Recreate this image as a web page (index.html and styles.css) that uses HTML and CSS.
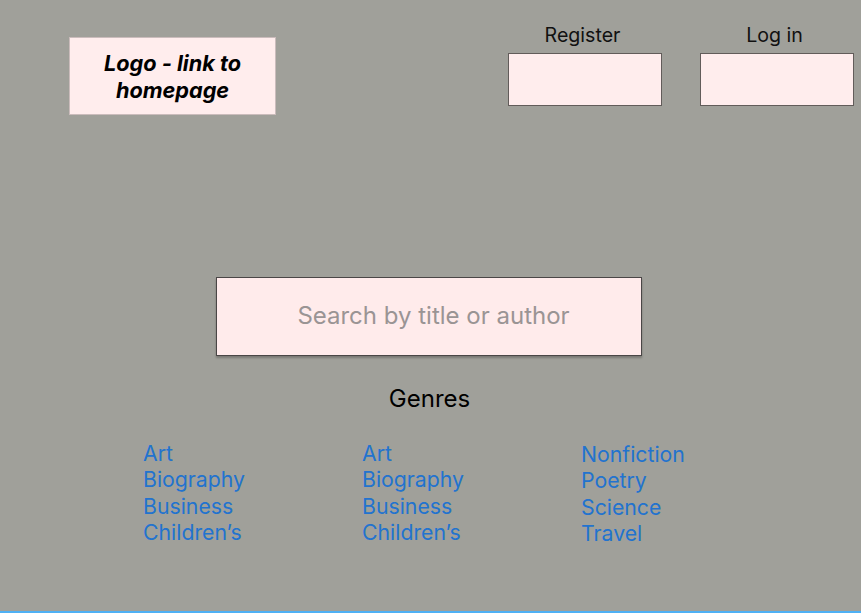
FILE: index.html
```html
<!DOCTYPE html>
<html lang="en">
<head>
<meta charset="utf-8">
<title>Books</title>
<link rel="stylesheet" href="styles.css">
</head>
<body>
<div class="page">
  <header class="header">
    <a class="logo" href="#">Logo - link to<br>homepage</a>
    <div class="auth">
      <div class="auth-item">
        <span class="auth-label">Register</span>
        <div class="auth-box"></div>
      </div>
      <div class="auth-item">
        <span class="auth-label">Log in</span>
        <div class="auth-box"></div>
      </div>
    </div>
  </header>
  <div class="search">Search by title or author</div>
  <h2 class="genres-title">Genres</h2>
  <div class="genres">
    <ul class="genre-col">
      <li><a href="#">Art</a></li>
      <li><a href="#">Biography</a></li>
      <li><a href="#">Business</a></li>
      <li><a href="#">Children’s</a></li>
    </ul>
    <ul class="genre-col">
      <li><a href="#">Art</a></li>
      <li><a href="#">Biography</a></li>
      <li><a href="#">Business</a></li>
      <li><a href="#">Children’s</a></li>
    </ul>
    <ul class="genre-col genre-col-last">
      <li><a href="#">Nonfiction</a></li>
      <li><a href="#">Poetry</a></li>
      <li><a href="#">Science</a></li>
      <li><a href="#">Travel</a></li>
    </ul>
  </div>
</div>
</body>
</html>
```

FILE: styles.css
```css
* { box-sizing: border-box; }
html, body { margin: 0; padding: 0; }
body {
  font-family: Inter, "Noto Sans", sans-serif;
  background: #a0a09a;
}
.page {
  width: 861px;
  height: 613px;
  background: #a0a09a;
  border-bottom: 2px solid #4eb0f4;
  overflow: hidden;
}
.header {
  display: flex;
  align-items: flex-start;
}
.logo {
  margin-left: 69px;
  margin-top: 37px;
  width: 207px;
  height: 78px;
  background: #ffeded;
  border: 1px solid #cbbcbc;
  display: flex;
  align-items: center;
  justify-content: center;
  text-align: center;
  font-size: 21.7px;
  font-weight: 700;
  font-style: italic;
  line-height: 27px;
  color: #000;
  text-decoration: none;
  padding-top: 2px;
}
.auth {
  margin-left: auto;
  margin-right: 7px;
  padding-top: 24px;
  display: flex;
  gap: 38px;
}
.auth-item {
  display: flex;
  flex-direction: column;
  align-items: center;
  gap: 7px;
}
.auth-label {
  font-size: 19.6px;
  line-height: 22px;
  color: #111;
  padding-right: 5px;
}
.auth-box {
  width: 154px;
  height: 53px;
  background: #ffeded;
  border: 1px solid #625c5a;
}
.search {
  margin-top: 162px;
  margin-left: 216px;
  width: 426px;
  height: 79px;
  background: #ffebeb;
  border: 1px solid #4a4646;
  box-shadow: 0 2px 2px rgba(0, 0, 0, 0.25);
  display: flex;
  align-items: center;
  justify-content: center;
  font-size: 24px;
  color: #9a9494;
  padding-left: 9px;
  padding-bottom: 2px;
}
.genres-title {
  margin: 30px 0 0 0;
  padding-right: 2px;
  text-align: center;
  font-size: 24px;
  line-height: 26px;
  font-weight: 400;
  color: #000;
}
.genres {
  margin-top: 28px;
  padding-left: 143px;
  display: grid;
  grid-template-columns: 219px 219px 219px;
}
.genre-col {
  list-style: none;
  margin: 0;
  padding: 0;
}
.genre-col-last { margin-top: 1px; }
.genre-col li {
  font-size: 21.25px;
  line-height: 26.4px;
}
.genre-col a {
  color: #2273cf;
  text-decoration: none;
}
```
